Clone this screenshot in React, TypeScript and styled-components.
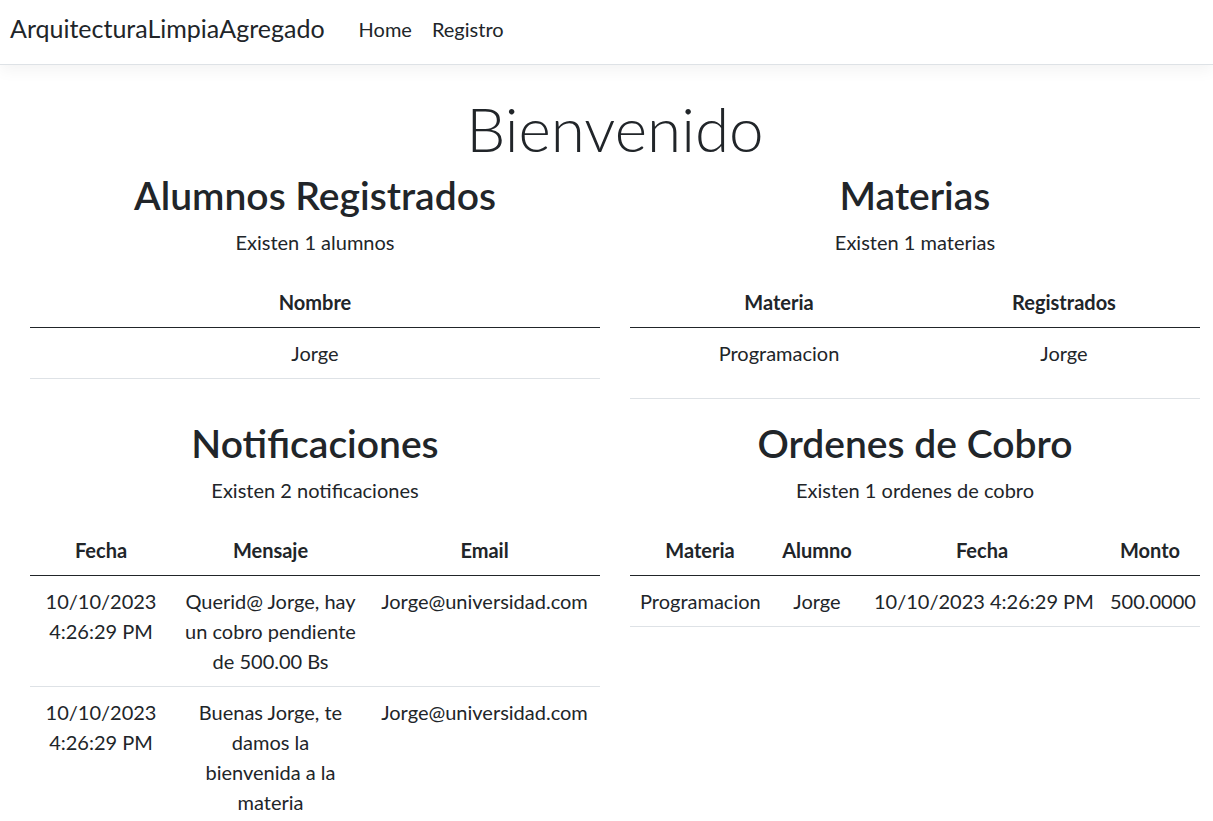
import styled, { createGlobalStyle } from "styled-components";

const GlobalStyle = createGlobalStyle`
  html, body {
    margin: 0;
    padding: 0;
    background: #fff;
  }
  body {
    font-family: "Lato", "Noto Sans", "Liberation Sans", sans-serif;
    font-size: 20px;
    line-height: 1.5;
    color: #212529;
  }
  * {
    box-sizing: border-box;
  }
`;

const Navbar = styled.header`
  display: flex;
  align-items: center;
  height: 65px;
  padding: 0 10px;
  background: #fff;
  border-bottom: 1px solid #dee2e6;
  box-shadow: 0 5px 15px rgba(0, 0, 0, 0.05);
  margin-bottom: 20px;
`;

const Brand = styled.a`
  font-size: 25px;
  color: #212529;
  text-decoration: none;
  margin-right: 24px;
  padding-bottom: 6px;
`;

const NavLink = styled.a`
  font-size: 20px;
  padding: 0 10px 6px;
  color: #212529;
  text-decoration: none;
`;

const Main = styled.main`
  padding: 0 13px 0 30px;
  text-align: center;
`;

const Title = styled.h1`
  font-size: 62px;
  font-weight: 300;
  line-height: 86px;
  margin: 0;
`;

const Grid = styled.div`
  display: grid;
  grid-template-columns: 1fr 1fr;
  column-gap: 30px;
`;

const Section = styled.section`
  min-width: 0;
`;

const Heading = styled.h2`
  font-size: 39px;
  font-weight: 600;
  line-height: 48px;
  margin: 0 0 8px;
`;

const Count = styled.p`
  margin: 0 0 20px;
`;

const Table = styled.table`
  width: 100%;
  table-layout: fixed;
  border-collapse: collapse;
  margin-bottom: 20px;

  th {
    font-weight: 700;
    padding: 10px;
    border-bottom: 1px solid #212529;
  }
  td {
    padding: 10px;
    vertical-align: top;
    border-bottom: 1px solid #dee2e6;
  }
`;

const NoWrap = styled.td`
  white-space: nowrap;
`;

const CellPara = styled.p`
  margin: 0 0 20px;
`;

const Cols = ({ widths }: { widths: number[] }) => (
  <colgroup>
    {widths.map((w, i) => (
      <col key={i} style={{ width: w }} />
    ))}
  </colgroup>
);

const notificaciones = [
  {
    fecha: "10/10/2023 4:26:29 PM",
    mensaje: "Querid@ Jorge, hay un cobro pendiente de 500.00 Bs",
    email: "Jorge@universidad.com",
  },
  {
    fecha: "10/10/2023 4:26:29 PM",
    mensaje: "Buenas Jorge, te damos la bienvenida a la materia",
    email: "Jorge@universidad.com",
  },
];

export default function App() {
  return (
    <>
      <GlobalStyle />
      <Navbar>
        <Brand href="#">ArquitecturaLimpiaAgregado</Brand>
        <NavLink href="#">Home</NavLink>
        <NavLink href="#">Registro</NavLink>
      </Navbar>
      <Main>
        <Title>Bienvenido</Title>
        <Grid>
          <Section>
            <Heading>Alumnos Registrados</Heading>
            <Count>Existen 1 alumnos</Count>
            <Table>
              <thead>
                <tr>
                  <th>Nombre</th>
                </tr>
              </thead>
              <tbody>
                <tr>
                  <td>Jorge</td>
                </tr>
              </tbody>
            </Table>
          </Section>
          <Section>
            <Heading>Materias</Heading>
            <Count>Existen 1 materias</Count>
            <Table>
              <Cols widths={[298, 272]} />
              <thead>
                <tr>
                  <th>Materia</th>
                  <th>Registrados</th>
                </tr>
              </thead>
              <tbody>
                <tr>
                  <td>Programacion</td>
                  <td>
                    <CellPara>Jorge</CellPara>
                  </td>
                </tr>
              </tbody>
            </Table>
          </Section>
          <Section>
            <Heading>Notificaciones</Heading>
            <Count>Existen 2 notificaciones</Count>
            <Table>
              <Cols widths={[142, 197, 231]} />
              <thead>
                <tr>
                  <th>Fecha</th>
                  <th>Mensaje</th>
                  <th>Email</th>
                </tr>
              </thead>
              <tbody>
                {notificaciones.map((n, i) => (
                  <tr key={i}>
                    <td>{n.fecha}</td>
                    <td>{n.mensaje}</td>
                    <td>{n.email}</td>
                  </tr>
                ))}
              </tbody>
            </Table>
          </Section>
          <Section>
            <Heading>Ordenes de Cobro</Heading>
            <Count>Existen 1 ordenes de cobro</Count>
            <Table>
              <Cols widths={[140, 94, 236, 100]} />
              <thead>
                <tr>
                  <th>Materia</th>
                  <th>Alumno</th>
                  <th>Fecha</th>
                  <th>Monto</th>
                </tr>
              </thead>
              <tbody>
                <tr>
                  <td>Programacion</td>
                  <td>Jorge</td>
                  <NoWrap>10/10/2023 4:26:29 PM</NoWrap>
                  <NoWrap>500.0000</NoWrap>
                </tr>
              </tbody>
            </Table>
          </Section>
        </Grid>
      </Main>
    </>
  );
}
